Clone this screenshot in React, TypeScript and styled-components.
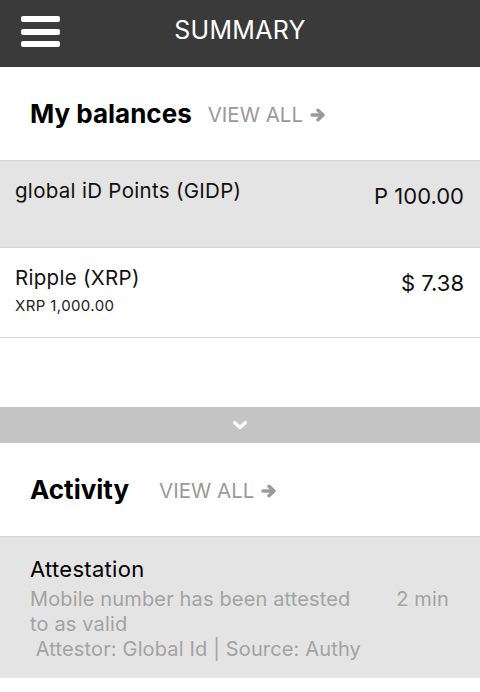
import * as React from 'react';
import styled, { createGlobalStyle } from 'styled-components';

const GlobalStyle = createGlobalStyle`
	html, body {
		margin: 0;
		padding: 0;
		background: #fff;
		font-family: Inter, 'Open Sans', 'Liberation Sans', sans-serif;
		-webkit-font-smoothing: antialiased;
	}
`

const Screen = styled.div`
	width: 480px;
	min-height: 692px;
	background: #fff;
`

const Header = styled.header`
	height: 67px;
	background-color: #3a3a3a;
	display: flex;
	align-items: center;
	justify-content: center;
	position: relative;
`

const MenuButton = styled.div`
	position: absolute;
	left: 21px;
	top: 16px;
	display: flex;
	flex-direction: column;
	gap: 6.5px;
`

const MenuBar = styled.span`
	display: block;
	width: 39px;
	height: 6px;
	border-radius: 2px;
	background: #fff;
`

const Title = styled.h1`
	margin: 0 0 7px 0;
	color: #fff;
	font-size: 25px;
	font-weight: 400;
	letter-spacing: 0.3px;
`

const SectionHead = styled.div<{ height: number; gap: number }>`
	height: ${p => p.height}px;
	display: flex;
	align-items: center;
	padding: 0 30px;
	gap: ${p => p.gap}px;
	border-bottom: 1.5px solid #d6d6d6;
	box-sizing: border-box;
`

const SectionTitle = styled.h2`
	margin: 0;
	font-size: 26px;
	font-weight: 700;
	color: #000;
`

const ViewAll = styled.a`
	display: flex;
	align-items: center;
	gap: 7px;
	color: #9a9a9a;
	font-size: 20.5px;
	font-weight: 400;
	text-decoration: none;
	margin-top: 2px;
`

const BalanceRow = styled.div<{ shaded?: boolean }>`
	min-height: 87px;
	box-sizing: border-box;
	display: flex;
	justify-content: space-between;
	padding: 17px 16px 22px 15px;
	background-color: ${p => p.shaded ? '#e4e4e4' : '#fff'};
	border-bottom: 1.5px solid #d6d6d6;
`

const BalanceName = styled.div`
	font-size: 20.5px;
	letter-spacing: 0.3px;
	color: #111;
	line-height: 26px;
`

const BalanceSub = styled.div`
	font-size: 15px;
	letter-spacing: 0.4px;
	color: #222;
	margin-top: 5px;
	line-height: 19px;
`

const BalanceAmount = styled.div`
	font-size: 22px;
	color: #111;
	line-height: 28px;
	margin-top: 4px;
`

const Spacer = styled.div`
	height: 69px;
`

const ExpandBar = styled.div`
	height: 36px;
	background-color: #c4c4c4;
	display: flex;
	align-items: center;
	justify-content: center;
`

const ActivityItem = styled.div`
	background-color: #e4e4e4;
	padding: 18px 31px 16px 30px;
	display: flex;
	justify-content: space-between;
`

const ActivityTitle = styled.div`
	font-size: 22px;
	letter-spacing: 0.3px;
	color: #000;
	line-height: 28px;
`

const ActivityText = styled.div`
	font-size: 20px;
	letter-spacing: 0.15px;
	color: #a3a3a3;
	line-height: 25px;
	width: 335px;
	margin-top: 4px;
`

const ActivityTime = styled.div`
	font-size: 20px;
	letter-spacing: 0.15px;
	color: #a3a3a3;
	margin-top: 32px;
	line-height: 25px;
`

const ArrowIcon = () => (
	<svg width="16" height="14" viewBox="0 0 16 14" fill="none" stroke="#9a9a9a"
		strokeWidth="3.4" strokeLinecap="round" strokeLinejoin="round">
		<path d="M2 7H12.5" />
		<path d="M8 2.2L13 7L8 11.8" />
	</svg>
)

const ChevronIcon = () => (
	<svg width="16" height="10" viewBox="0 0 16 10" fill="none" stroke="#fff"
		strokeWidth="3.2" strokeLinecap="round" strokeLinejoin="round">
		<path d="M2.5 2.5L8 7.5L13.5 2.5" />
	</svg>
)

type Balance = { name: string; sub?: string; amount: string; shaded?: boolean };

const balances: Balance[] = [
	{ name: 'global iD Points (GIDP)', amount: 'P 100.00', shaded: true },
	{ name: 'Ripple (XRP)', sub: 'XRP 1,000.00', amount: '$ 7.38' },
];

const App = () => {
	return (
		<Screen>
			<GlobalStyle />
			<Header>
				<MenuButton>
					<MenuBar />
					<MenuBar />
					<MenuBar />
				</MenuButton>
				<Title>SUMMARY</Title>
			</Header>

			<SectionHead height={94} gap={16}>
				<SectionTitle>My balances</SectionTitle>
				<ViewAll>VIEW ALL <ArrowIcon /></ViewAll>
			</SectionHead>

			{balances.map(b => (
				<BalanceRow key={b.name} shaded={b.shaded}>
					<div>
						<BalanceName>{b.name}</BalanceName>
						{b.sub && <BalanceSub>{b.sub}</BalanceSub>}
					</div>
					<BalanceAmount>{b.amount}</BalanceAmount>
				</BalanceRow>
			))}

			<Spacer />
			<ExpandBar><ChevronIcon /></ExpandBar>

			<SectionHead height={94} gap={30}>
				<SectionTitle>Activity</SectionTitle>
				<ViewAll>VIEW ALL <ArrowIcon /></ViewAll>
			</SectionHead>

			<ActivityItem>
				<div>
					<ActivityTitle>Attestation</ActivityTitle>
					<ActivityText>
						Mobile number has been attested to as valid<br />
						&nbsp;Attestor: Global Id | Source: Authy
					</ActivityText>
				</div>
				<ActivityTime>2 min</ActivityTime>
			</ActivityItem>
		</Screen>
	)
}

export default App;
